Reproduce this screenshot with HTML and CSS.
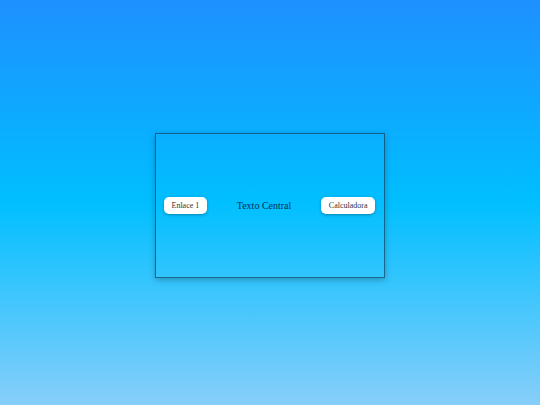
FILE: index.html
```html
<!DOCTYPE html>
<html lang="es">
<head>
<meta charset="utf-8">
<title>Texto Central</title>
<link rel="stylesheet" href="styles.css">
</head>
<body>
<main class="page">
  <section class="panel">
    <a class="btn" href="#">Enlace 1</a>
    <span class="center-text">Texto Central</span>
    <a class="btn" href="#">Calculadora</a>
  </section>
</main>
</body>
</html>
```
FILE: styles.css
```css
html, body {
  margin: 0;
  padding: 0;
  height: 100%;
}
body {
  background: linear-gradient(to bottom, #1e90ff 0%, #00bfff 50%, #87cefa 100%);
  font-family: "Liberation Serif", "Times New Roman", serif;
}
.page {
  height: 100%;
  box-sizing: border-box;
  padding-top: 5px;
  display: flex;
  align-items: center;
  justify-content: center;
}
.panel {
  width: 230px;
  height: 145px;
  box-sizing: border-box;
  border: 1px solid rgba(20, 70, 100, 0.75);
  box-shadow: 0 2px 6px rgba(0, 0, 0, 0.25);
  padding: 0 8px;
  display: flex;
  align-items: center;
  justify-content: space-between;
  margin-left: -1px;
}
.btn {
  background: #fff;
  color: #333;
  text-decoration: none;
  font-size: 8px;
  line-height: 17px;
  height: 17px;
  padding: 0 8px;
  border-radius: 5px;
  box-shadow: 0 1px 3px rgba(0, 0, 0, 0.3);
}
.center-text {
  font-size: 10px;
  color: #003355;
}
```
